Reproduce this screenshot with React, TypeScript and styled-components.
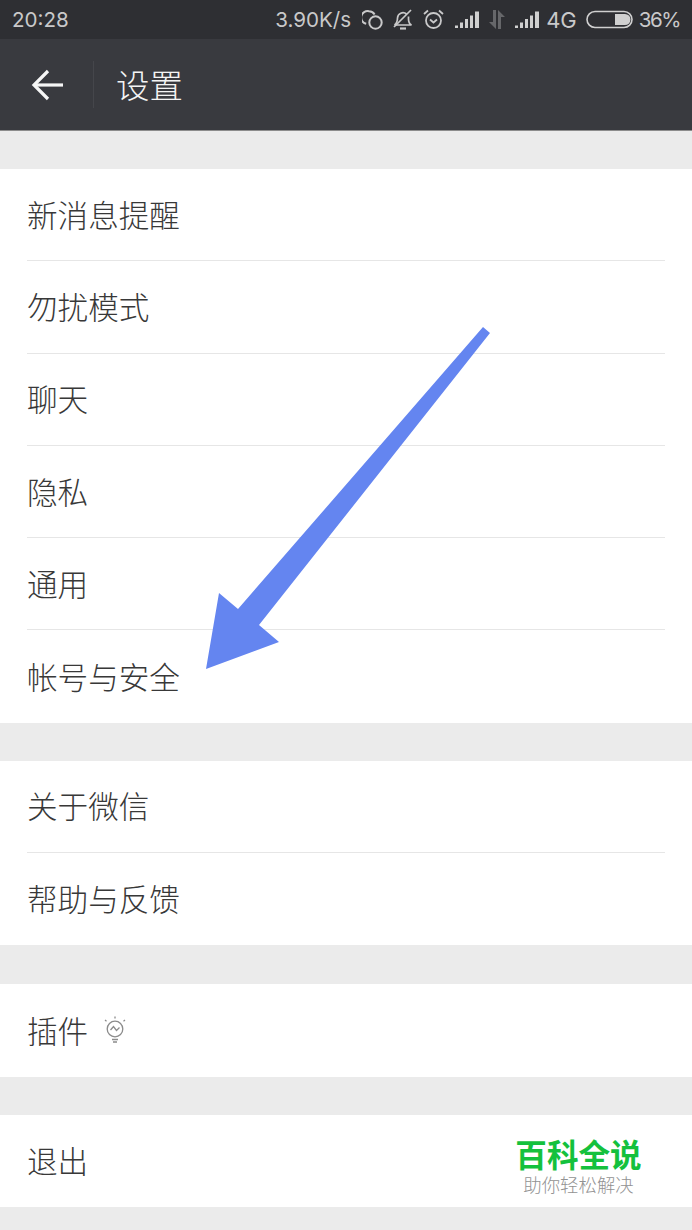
import React from "react";
import styled, { createGlobalStyle } from "styled-components";

const cjk = `"Noto Sans CJK SC", "Noto Sans", sans-serif`;

const Global = createGlobalStyle`
  html, body { margin: 0; padding: 0; background: #ebebeb; }
  body { font-family: ${cjk}; }
`;

const Page = styled.div`
  position: relative;
  width: 692px;
  height: 1230px;
  overflow: hidden;
  background: #ebebeb;
`;

const StatusBar = styled.div`
  height: 39px;
  background: #2e2f33;
  color: #c9c9ca;
  display: flex;
  align-items: center;
  justify-content: space-between;
  padding: 0 12px;
  font-family: Inter, "Liberation Sans", sans-serif;
  font-size: 20.6px;
`;

const StatusRight = styled.div`
  display: flex;
  align-items: center;
`;

const Speed = styled.span`
  margin-right: 11px;
`;

const NetworkLabel = styled.span`
  margin: 0 9px 0 7px;
  font-size: 22px;
`;

const BatteryLevel = styled.span`
  letter-spacing: -1.5px;
`;

const Toolbar = styled.div`
  height: 92px;
  background: #393a3f;
  border-bottom: 1px solid #8c8c8c;
  box-sizing: border-box;
  display: flex;
  align-items: center;
  padding-left: 31px;
`;

const BackDivider = styled.div`
  width: 1px;
  height: 47px;
  background: #45464b;
  margin: 0 24px 0 29px;
`;

const Title = styled.div`
  color: #f4f4f4;
  font-size: 33.5px;
  line-height: 1;
  font-weight: 300;
  margin: 0 0 2px -2px;
`;

const Group = styled.div<{ $top: number }>`
  background: #fff;
  margin-top: ${(p) => p.$top}px;
`;

const Row = styled.div`
  height: 92.3px;
  box-sizing: border-box;
  margin: 0 27px;
  padding-bottom: 2px;
  display: flex;
  align-items: center;
  gap: 15px;
  color: #383838;
  font-size: 30.6px;
  font-weight: 300;
  border-bottom: 1px solid #e6e6e6;
  &:last-child { border-bottom: 0; }
`;

const Overlay = styled.svg`
  position: absolute;
  left: 0;
  top: 0;
`;

const Watermark = styled.div`
  position: absolute;
  left: 516px;
  top: 1134px;
  display: flex;
  flex-direction: column;
  align-items: center;
  width: 125px;
`;

const WatermarkTitle = styled.div`
  color: #14c13d;
  font-size: 31.6px;
  font-weight: 700;
  line-height: 39px;
  white-space: nowrap;
`;

const WatermarkSub = styled.div`
  color: #929292;
  font-size: 18.4px;
  font-weight: 300;
  line-height: 22px;
  white-space: nowrap;
`;

const LinkedIcon = () => (
  <svg width="21" height="20" viewBox="0 0 21 20" fill="none" stroke="#c9c9ca" strokeWidth="2">
    <circle cx="13.5" cy="12.5" r="6.2" />
    <path d="M4.2 13.8A6.4 6.4 0 0 1 7 1.2a6.4 6.4 0 0 1 5.6 3.2" />
  </svg>
);

const MuteBell = () => (
  <svg width="20" height="21" viewBox="0 0 20 21" fill="none" stroke="#c9c9ca" strokeWidth="1.7" style={{ marginLeft: 10 }}>
    <path d="M1.5 16c2-1.5 3-3 3-7a5.5 5.5 0 0 1 9-4M15.5 7.5V10c0 3 1 5 3 6H1.5" />
    <path d="M1 18L18 1" />
    <path d="M7 19.5h6" strokeWidth="2.2" />
  </svg>
);

const Alarm = () => (
  <svg width="21" height="21" viewBox="0 0 21 21" fill="none" stroke="#c9c9ca" strokeWidth="1.8" style={{ marginLeft: 10 }}>
    <circle cx="10.5" cy="11.5" r="7.5" />
    <path d="M7 10.5l3.5 3 3.5-3" />
    <path d="M1 5l4-3.5M20 5l-4-3.5" />
  </svg>
);

const Signal = () => (
  <svg width="24" height="17" viewBox="0 0 24 17" fill="#d0d0d0" style={{ marginLeft: 11 }}>
    <rect x="0" y="14.5" width="3" height="2.5" />
    <rect x="5" y="11.5" width="3" height="5.5" />
    <rect x="10" y="8" width="3" height="9" />
    <rect x="15" y="4.5" width="3" height="12.5" />
    <rect x="20" y="0.5" width="4" height="16.5" />
  </svg>
);

const DataArrows = () => (
  <svg width="18" height="19" viewBox="0 0 18 19" fill="#66676a" style={{ marginLeft: 9, marginRight: -2 }}>
    <path d="M5 0h3v19L1 12h4zM10 0l7 7h-4v12h-3z" />
  </svg>
);

const Battery = () => (
  <svg width="47" height="19" viewBox="0 0 47 19" style={{ marginRight: 6 }}>
    <rect x="1" y="1.5" width="45" height="16" rx="8" fill="none" stroke="#d0d0d0" strokeWidth="1.6" />
    <path d="M29 4h10a5.5 5.5 0 0 1 0 11H29z" fill="#d0d0d0" />
  </svg>
);

const BackArrow = () => (
  <svg width="33" height="32" viewBox="0 0 33 32" fill="none" stroke="#f6f6f6" strokeWidth="3.2">
    <path d="M32 16H3" />
    <path d="M17 2L3 16l14 14" />
  </svg>
);

const Bulb = () => (
  <svg width="24" height="30" viewBox="0 0 24 30" fill="none" stroke="#8b8b8b" strokeWidth="1.3">
    <circle cx="12" cy="14" r="7.8" />
    <path d="M7.5 15l3-3.5 3 4 3-3" />
    <path d="M9 24.5h6M10 27h4" />
    <path d="M12 1.5v2M2 5l1.5 1.2M22 5l-1.5 1.2" />
  </svg>
);

const groups: { top: number; rows: React.ReactNode[] }[] = [
  { top: 38, rows: ["新消息提醒", "勿扰模式", "聊天", "隐私", "通用", "帐号与安全"] },
  { top: 38, rows: ["关于微信", "帮助与反馈"] },
  { top: 39, rows: [<React.Fragment key="p">插件<Bulb /></React.Fragment>] },
  { top: 38, rows: ["退出"] },
];

export default function App() {
  return (
    <Page>
      <Global />
      <StatusBar>
        <span>20:28</span>
        <StatusRight>
          <Speed>3.90K/s</Speed>
          <LinkedIcon />
          <MuteBell />
          <Alarm />
          <Signal />
          <DataArrows />
          <Signal />
          <NetworkLabel>4G</NetworkLabel>
          <Battery />
          <BatteryLevel>36%</BatteryLevel>
        </StatusRight>
      </StatusBar>
      <Toolbar>
        <BackArrow />
        <BackDivider />
        <Title>设置</Title>
      </Toolbar>
      {groups.map((g, i) => (
        <Group key={i} $top={g.top}>
          {g.rows.map((r, j) => (
            <Row key={j}>{r}</Row>
          ))}
        </Group>
      ))}
      <Overlay width="692" height="1230" viewBox="0 0 692 1230">
        <polygon
          points="483,327 490,333 259,625 279,642 206,669 219,593 238,609"
          fill="#6485f0"
        />
      </Overlay>
      <Watermark>
        <WatermarkTitle>百科全说</WatermarkTitle>
        <WatermarkSub>助你轻松解决</WatermarkSub>
      </Watermark>
    </Page>
  );
}
